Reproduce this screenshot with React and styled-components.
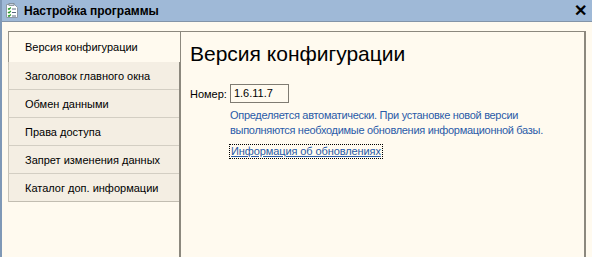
import React from 'react';
import styled, { createGlobalStyle } from 'styled-components';

const Global = createGlobalStyle`
  html, body { margin: 0; padding: 0; height: 100%; }
  body { background: #fffaef; font-family: "Liberation Sans", Arial, sans-serif; }
  #root { height: 100%; }
`;

const Window = styled.div`
  display: flex;
  flex-direction: column;
  height: 257px;
  width: 592px;
  overflow: hidden;
  background: #fffaef;
  border-left: 2px solid #7f98b6;
  box-sizing: border-box;
`;

const TitleBar = styled.div`
  height: 21px;
  flex: none;
  display: flex;
  align-items: center;
  background: #9fb9d7;
  border-bottom: 1px solid #8394a8;
  padding: 0 5px 0 3px;
`;

const Title = styled.div`
  flex: 1;
  margin-left: 5px;
  font-family: "Liberation Sans", Arial, sans-serif;
  font-weight: bold;
  font-size: 12px;
  color: #000;
`;

const Body = styled.div`
  flex: 1;
  display: flex;
  padding: 9px 6px 0 6px;
`;

const TabList = styled.div`
  width: 171px;
  flex: none;
  display: flex;
  flex-direction: column;
`;

const Tab = styled.div`
  height: ${p => (p.active ? 30 : 27)}px;
  display: flex;
  align-items: center;
  padding-left: 16px;
  font-size: 11px;
  color: #000;
  white-space: nowrap;
  box-sizing: content-box;
  border-left: 1px solid ${p => (p.active ? '#9a968c' : '#c9c4b8')};
  ${p =>
    p.active
      ? `
    background: #fffaef;
    border-top: 1px solid #8c887e;
    margin-right: -1px;
    position: relative;
    z-index: 1;
  `
      : `
    background: #f4eee3;
    border-bottom: 1px solid #d3cec3;
  `}
  &:last-child {
    border-bottom-color: #c2bdb1;
  }
`;

const Panel = styled.div`
  flex: 1;
  border-top: 1px solid #8c887e;
  border-left: 2px solid #8c887e;
  border-right: 2px solid #8c887e;
  padding: 10px 9px;
`;

const Heading = styled.h1`
  margin: 0 0 18px 0;
  font-family: "Liberation Sans", Arial, sans-serif;
  font-weight: normal;
  font-size: 21px;
  line-height: 24px;
  color: #000;
`;

const Row = styled.div`
  display: flex;
  align-items: center;
  gap: 3px;
  font-size: 11px;
`;

const Field = styled.div`
  width: 54px;
  height: 17px;
  border: 1px solid #7f7b72;
  background: #fffaef;
  font-size: 11px;
  line-height: 17px;
  padding-left: 3px;
`;

const Note = styled.div`
  margin: 5px 0 0 40px;
  font-size: 11px;
  line-height: 15px;
  color: #2a5ba8;
  letter-spacing: -0.3px;
  white-space: nowrap;
`;

const Link = styled.a`
  display: inline-block;
  margin: 7px 0 0 40px;
  font-size: 11px;
  line-height: 13px;
  color: #2a5ba8;
  letter-spacing: -0.1px;
  text-decoration: underline;
  outline: 1px dotted #000;
  outline-offset: 0;
  padding: 0 1px;
`;

const Close = styled.div`
  font-size: 16px;
  font-weight: bold;
  line-height: 1;
  color: #000;
`;

const SettingsIcon = () => (
  <svg width="14" height="16" viewBox="0 0 14 16">
    <path d="M1.5 1.5h8l3 3v10h-11z" fill="#fff" stroke="#8f9aa6" />
    <rect x="4" y="0.5" width="5" height="2" fill="#c9d3de" stroke="#7a8592" strokeWidth="0.8" />
    <path d="M3 5.5l1 1 1.8-2M3 9l1 1 1.8-2M3 12.5l1 1 1.8-2" fill="none" stroke="#2e9a2e" strokeWidth="1.2" />
    <path d="M7 6h4M7 9.5h4M7 13h4" stroke="#5a6a80" strokeWidth="1" />
  </svg>
);

const tabs = [
  'Заголовок главного окна',
  'Обмен данными',
  'Права доступа',
  'Запрет изменения данных',
  'Каталог доп. информации',
];

export default function App() {
  return (
    <Window>
      <Global />
      <TitleBar>
        <SettingsIcon />
        <Title>Настройка программы</Title>
        <Close>✕</Close>
      </TitleBar>
      <Body>
        <TabList>
          <Tab active>Версия конфигурации</Tab>
          {tabs.map(t => (
            <Tab key={t}>{t}</Tab>
          ))}
        </TabList>
        <Panel>
          <Heading>Версия конфигурации</Heading>
          <Row>
            Номер:
            <Field>1.6.11.7</Field>
          </Row>
          <Note>
            Определяется автоматически. При установке новой версии
            <br />
            выполняются необходимые обновления информационной базы.
          </Note>
          <Link href="#">Информация об обновлениях</Link>
        </Panel>
      </Body>
    </Window>
  );
}
